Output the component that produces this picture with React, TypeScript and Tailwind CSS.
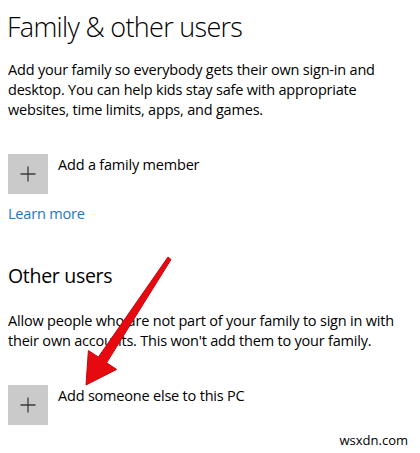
import React from "react";

function PlusTile() {
  return (
    <div className="flex h-10 w-10 shrink-0 items-center justify-center bg-[#cacaca]">
      <svg width="16" height="16" viewBox="0 0 16 16" aria-hidden="true">
        <path d="M8 0.5v15M0.5 8h15" stroke="#3c3c3c" strokeWidth="1.3" fill="none" />
      </svg>
    </div>
  );
}

function AddRow({ label }: { label: string }) {
  return (
    <div className="flex items-start gap-[10px]">
      <PlusTile />
      <span className="mt-[1px] text-[14.5px] leading-5 tracking-[-0.2px] text-black">{label}</span>
    </div>
  );
}

export default function App() {
  return (
    <div
      className="relative h-[453px] w-[420px] overflow-hidden bg-white pl-2 pt-[9px]"
      style={{ fontFamily: '"Open Sans", "Noto Sans", sans-serif' }}
    >
      <h1 className="-ml-[1px] text-[27px] font-light leading-9 tracking-[-0.7px] text-black">
        Family &amp; other users
      </h1>

      <p className="mt-[15px] w-[400px] text-[14.5px] leading-5 tracking-[-0.2px] text-black">
        Add your family so everybody gets their own sign-in and desktop. You can help kids stay safe with
        appropriate websites, time limits, apps, and games.
      </p>

      <div className="mt-[34px]">
        <AddRow label="Add a family member" />
      </div>

      <a className="mt-[10px] block text-[14.5px] leading-5 tracking-[-0.2px] text-[#1d76c2]">Learn more</a>

      <h2 className="mt-[38px] text-[19.5px] font-normal leading-7 tracking-[-0.3px] text-black">Other users</h2>

      <p className="mt-[21px] w-[402px] text-[14.5px] leading-5 tracking-[-0.2px] text-black">
        Allow people who are not part of your family to sign in with their own accounts. This won't add them
        to your family.
      </p>

      <div className="mt-[34px]">
        <AddRow label="Add someone else to this PC" />
      </div>

      <div className="mt-[7px] pr-3 text-right text-[13px] leading-4 text-black">wsxdn.com</div>

      <svg
        className="pointer-events-none absolute left-0 top-0"
        width="420"
        height="453"
        viewBox="0 0 420 453"
        aria-hidden="true"
      >
        <polygon
          points="168,257 171,259.5 106.6,362.8 116.6,369.4 86,385 88.4,350.6 98.4,357"
          fill="#e60a10"
          stroke="#c8060c"
          strokeWidth="1"
          strokeLinejoin="round"
        />
      </svg>
    </div>
  );
}
